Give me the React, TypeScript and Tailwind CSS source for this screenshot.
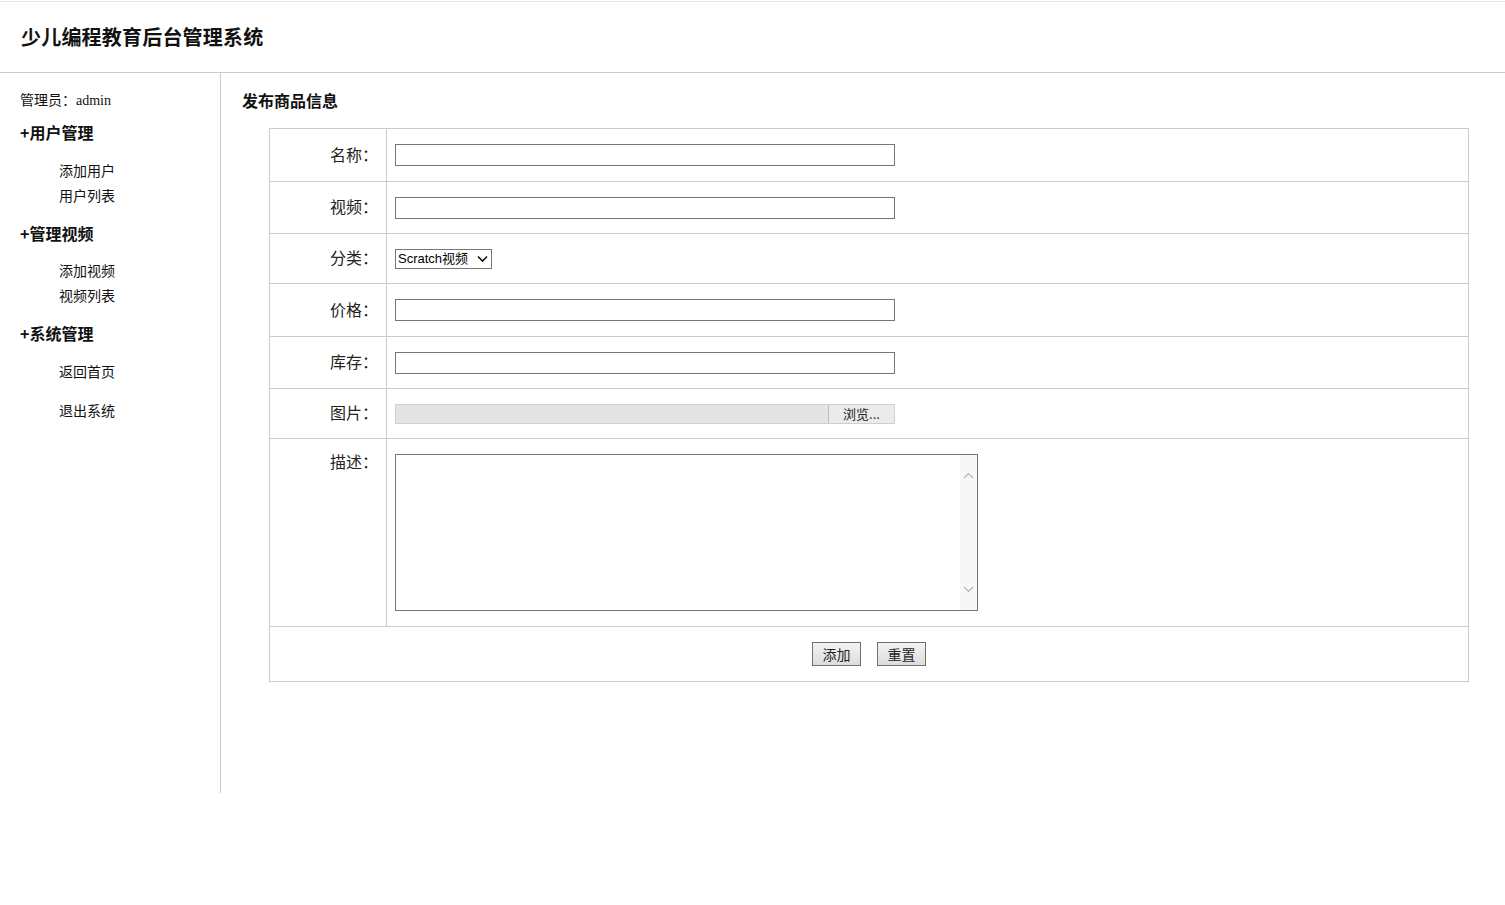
import React from "react";

const serif = { fontFamily: '"Liberation Serif", "Noto Sans CJK SC", serif' };

function TextRow({ label, h }: { label: string; h: string }) {
  return (
    <div className={`flex ${h} border-b border-[#cccccc]`}>
      <div className="w-[117px] shrink-0 border-r border-[#cccccc] flex items-center justify-end pr-[8px] pb-[3px] text-[16px] leading-[16px] text-[#222]">
        {label}
      </div>
      <div className="flex-1 flex items-center pl-[8px]">
        <input
          type="text"
          className="block w-[500px] h-[22px] border border-[#767676] bg-white outline-none px-[2px] text-[13px]"
        />
      </div>
    </div>
  );
}

export default function App() {
  return (
    <div
      className="w-[1505px] h-[905px] bg-white text-[#111] pt-[1px]"
      style={{ fontFamily: '"Noto Sans CJK SC", "Liberation Sans", sans-serif' }}
    >
      {/* header */}
      <div className="h-[72px] border-t border-b border-t-[#e6e6e6] border-b-[#cccccc] flex items-center pl-[21px] pb-[1px]">
        <h1 className="text-[20px] font-bold leading-[24px] tracking-[0.2px]">少儿编程教育后台管理系统</h1>
      </div>

      <div className="flex">
        {/* sidebar */}
        <div className="w-[221px] h-[720px] shrink-0 border-r border-[#cccccc] pl-[20px] pt-[18px]">
          <div className="text-[14px] leading-[20px]" style={serif}>
            管理员：admin
          </div>
          <h3 className="mt-[9px] text-[16px] leading-[24px] font-bold">+用户管理</h3>
          <ul className="mt-[14px] pl-[39px] text-[14px]">
            <li className="leading-[25px]">添加用户</li>
            <li className="leading-[25px]">用户列表</li>
          </ul>
          <h3 className="mt-[13px] text-[16px] leading-[24px] font-bold">+管理视频</h3>
          <ul className="mt-[13px] pl-[39px] text-[14px]">
            <li className="leading-[25px]">添加视频</li>
            <li className="leading-[25px]">视频列表</li>
          </ul>
          <h3 className="mt-[13px] text-[16px] leading-[24px] font-bold">+系统管理</h3>
          <ul className="mt-[14px] pl-[39px] text-[14px]">
            <li className="leading-[25px]">返回首页</li>
            <li className="leading-[25px] mt-[14px]">退出系统</li>
          </ul>
        </div>

        {/* main */}
        <div className="flex-1 pl-[21px] pt-[15px]">
          <h2 className="text-[16px] leading-[24px] font-bold">发布商品信息</h2>
          <div className="mt-[16px] ml-[27px] w-[1200px] border border-[#cccccc]">
            <TextRow label="名称：" h="h-[53px]" />
            <TextRow label="视频：" h="h-[52px]" />

            {/* category */}
            <div className="flex h-[50px] border-b border-[#cccccc]">
              <div className="w-[117px] shrink-0 border-r border-[#cccccc] flex items-center justify-end pr-[8px] pb-[3px] text-[16px] leading-[16px] text-[#222]">
                分类：
              </div>
              <div className="flex-1 flex items-center pl-[8px]">
                <div className="relative w-[97px] h-[20px]">
                  <select
                    className="block appearance-none w-full h-full border border-[#767676] bg-white pl-[2px] pr-[16px] text-[13px] leading-[18px] text-black outline-none rounded-none"
                    style={{ fontFamily: '"Liberation Sans", "Noto Sans CJK SC", sans-serif' }}
                    defaultValue="s"
                  >
                    <option value="s">Scratch视频</option>
                    <option value="p">Python视频</option>
                  </select>
                  <svg
                    className="absolute right-[4px] top-[6px] pointer-events-none"
                    width="11"
                    height="8"
                    viewBox="0 0 11 8"
                  >
                    <path d="M1 1.5 L5.5 6 L10 1.5" stroke="#111" strokeWidth="1.6" fill="none" />
                  </svg>
                </div>
              </div>
            </div>

            <TextRow label="价格：" h="h-[53px]" />
            <TextRow label="库存：" h="h-[52px]" />

            {/* picture */}
            <div className="flex h-[50px] border-b border-[#cccccc]">
              <div className="w-[117px] shrink-0 border-r border-[#cccccc] flex items-center justify-end pr-[8px] pb-[3px] text-[16px] leading-[16px] text-[#222]">
                图片：
              </div>
              <div className="flex-1 flex items-center pl-[8px]">
                <div className="w-[500px] h-[20px] flex border border-[#cfcfcf] bg-[#e4e4e4]">
                  <div className="flex-1" />
                  <div className="w-[66px] h-full border-l border-[#bdbdbd] bg-[#ebebeb] flex items-center justify-center text-[13px] leading-[13px] text-[#222]">
                    浏览...
                  </div>
                </div>
              </div>
            </div>

            {/* description */}
            <div className="flex h-[188px] border-b border-[#cccccc]">
              <div className="w-[117px] shrink-0 border-r border-[#cccccc] flex justify-end pr-[8px] pt-[14px] text-[16px] leading-[16px] text-[#222]">
                描述：
              </div>
              <div className="flex-1 pl-[8px] pt-[15px]">
                <div className="relative w-[583px] h-[157px]">
                  <textarea className="block w-full h-full border border-[#767676] resize-none outline-none overflow-hidden p-[2px] pr-[20px] text-[13px]" />
                  <div className="absolute right-[1px] top-[1px] bottom-[1px] w-[17px] bg-[#f7f7f7] flex flex-col items-center justify-between pt-[17px] pb-[17px]">
                    <svg width="11" height="7" viewBox="0 0 11 7">
                      <path d="M1 6 L5.5 1.5 L10 6" stroke="#b4b4b4" strokeWidth="1.2" fill="none" />
                    </svg>
                    <svg width="11" height="7" viewBox="0 0 11 7">
                      <path d="M1 1 L5.5 5.5 L10 1" stroke="#b4b4b4" strokeWidth="1.2" fill="none" />
                    </svg>
                  </div>
                </div>
              </div>
            </div>

            {/* buttons */}
            <div className="h-[54px] flex items-center justify-center gap-[16px]">
              <button className="w-[49px] h-[24px] border border-[#707070] bg-gradient-to-b from-[#f3f3f3] to-[#dddddd] text-[14px] leading-[14px] text-[#222] pb-[1px]">
                添加
              </button>
              <button className="w-[49px] h-[24px] border border-[#707070] bg-gradient-to-b from-[#f3f3f3] to-[#dddddd] text-[14px] leading-[14px] text-[#222] pb-[1px]">
                重置
              </button>
            </div>
          </div>
        </div>
      </div>
    </div>
  );
}
